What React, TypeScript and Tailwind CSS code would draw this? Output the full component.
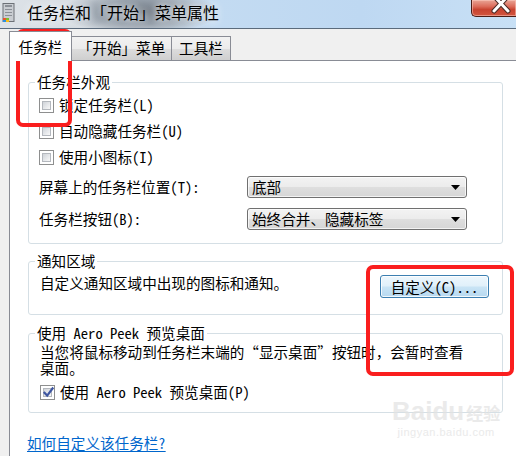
import React from "react";

const cjk = "font-['Noto_Sans_Mono_CJK_SC','Noto_Sans_CJK_SC',sans-serif]";

function CheckBox({ checked = false }: { checked?: boolean }) {
  return (
    <span className="relative flex h-[15px] w-[15px] shrink-0 border border-[#8e8f8f] bg-white p-[2px]">
      <span className="block h-full w-full border border-[#b4b8be] bg-[linear-gradient(135deg,#cfd3d8_0%,#e6e8eb_55%,#f8f8f8_100%)]" />
      {checked && (
        <svg
          className="absolute left-[1px] top-[0px]"
          width="13"
          height="13"
          viewBox="0 0 13 13"
        >
          <path
            d="M2.5 6.8 L5.2 9.6 L10.6 2.4"
            fill="none"
            stroke="#3e56a0"
            strokeWidth="2.2"
            strokeLinecap="square"
          />
        </svg>
      )}
    </span>
  );
}

function Select({ value }: { value: string }) {
  return (
    <div className="flex h-[22px] w-[220px] items-center justify-between rounded-[3px] border border-[#707070] bg-[linear-gradient(180deg,#f3f3f3_0%,#ececec_48%,#dedede_52%,#d6d6d6_100%)] pl-[4px] pr-[6px] shadow-[inset_0_0_0_1px_rgba(255,255,255,0.7)]">
      <span className="leading-[16px]">{value}</span>
      <svg width="9" height="5" viewBox="0 0 9 5">
        <path d="M0 0 H9 L4.5 5 Z" fill="#000" />
      </svg>
    </div>
  );
}

function Group({
  title,
  className = "",
  children,
}: {
  title: string;
  className?: string;
  children: React.ReactNode;
}) {
  return (
    <fieldset
      className={`ml-[18px] w-[475px] rounded-[3px] border border-[#d5dfe5] ${className}`}
    >
      <legend className="ml-[6px] px-[2px] leading-[16px]">{title}</legend>
      {children}
    </fieldset>
  );
}

function WindowIcon() {
  return (
    <svg width="15" height="21" viewBox="0 0 15 21">
      <rect x="1" y="0.5" width="11" height="18" fill="#c9cdd2" stroke="#6c7177" />
      <rect x="3" y="2" width="7" height="2" fill="#8b9097" />
      <rect x="3" y="6" width="7" height="1" fill="#8b9097" />
      <rect x="3" y="9" width="7" height="1" fill="#8b9097" />
      <rect x="3" y="12" width="7" height="1" fill="#8b9097" />
      <rect x="1" y="15" width="3" height="2" fill="#e8552d" />
      <rect x="4" y="15" width="3" height="2" fill="#7cbf2a" />
      <rect x="1" y="17" width="3" height="2" fill="#2d8fe0" />
      <rect x="4" y="17" width="3" height="2" fill="#f4bf1c" />
    </svg>
  );
}

function CloseButton() {
  return (
    <div className="h-[17px] w-[45px] shrink-0 overflow-hidden rounded-bl-[5px] border-b border-l border-[#4b1d16] bg-[linear-gradient(180deg,#e9a596_0%,#dc6c5b_40%,#c84330_60%,#d2563f_100%)] shadow-[inset_0_0_0_1px_rgba(255,210,200,0.5)]">
      <svg width="45" height="17" viewBox="0 0 45 17">
        <path
          d="M22 -4 L36 11 M36 -4 L22 11"
          stroke="#4a2a25"
          strokeWidth="5"
          strokeLinecap="round"
        />
        <path
          d="M22 -4 L36 11 M36 -4 L22 11"
          stroke="#ffffff"
          strokeWidth="3"
          strokeLinecap="round"
        />
      </svg>
    </div>
  );
}

export default function App() {
  return (
    <div
      className={`relative h-[456px] w-[516px] overflow-hidden bg-[#f0f0f0] text-[14.6px] text-black ${cjk}`}
    >
      {/* title bar */}
      <div className="flex h-[29px] items-start border-b border-[#5b6b7c] bg-[radial-gradient(ellipse_80px_22px_at_140px_12px,#6f7882_0%,#949ea9_55%,rgba(180,200,220,0)_100%),linear-gradient(90deg,#dde2e7_0%,#d2d9e0_28%,#c3dbf2_42%,#bed8f2_70%,#c8e0f5_100%)]">
        <div className="ml-[2px] mt-[3px]">
          <WindowIcon />
        </div>
        <div className="ml-[10px] mt-[2px] text-[16px] leading-[20px] [text-shadow:0_0_6px_#eef2f6,0_0_10px_#eef2f6]">
          任务栏和「开始」菜单属性
        </div>
        <div className="flex-1" />
        <CloseButton />
      </div>

      <div className="pl-[9px] pt-[2px]">
        {/* tabs */}
        <div className="flex items-end">
          <div className="relative z-10 mb-[-1px] h-[30px] w-[63px] border-l border-r border-t border-[#898c95] bg-white pt-[7px] text-center leading-[16px]">
            任务栏
          </div>
          <div className="h-[24px] w-[100px] border-r border-t border-[#898c95] bg-[linear-gradient(180deg,#f2f2f2_0%,#ebebeb_50%,#dddddd_51%,#cfcfcf_100%)] pt-[3px] text-center leading-[16px]">
            「开始」菜单
          </div>
          <div className="h-[24px] w-[59px] border-r border-t border-[#898c95] bg-[linear-gradient(180deg,#f2f2f2_0%,#ebebeb_50%,#dddddd_51%,#cfcfcf_100%)] pt-[3px] text-center leading-[16px]">
            工具栏
          </div>
        </div>

        {/* tab panel */}
        <div className="h-[420px] border-l border-t border-[#898c95] bg-white pt-[13px]">
          <Group title="任务栏外观">
            <div className="pb-[13px] pl-[10px] pt-[2px]">
              <div className="flex h-[26px] items-center gap-[5px]">
                <CheckBox />
                <span className="leading-[16px]">锁定任务栏(L)</span>
              </div>
              <div className="flex h-[26px] items-center gap-[5px]">
                <CheckBox />
                <span className="leading-[16px]">自动隐藏任务栏(U)</span>
              </div>
              <div className="flex h-[26px] items-center gap-[5px]">
                <CheckBox />
                <span className="leading-[16px]">使用小图标(I)</span>
              </div>
              <div className="mt-[6px] flex items-center">
                <span className="w-[208px] leading-[16px]">屏幕上的任务栏位置(T):</span>
                <Select value="底部" />
              </div>
              <div className="mt-[10px] flex items-center">
                <span className="w-[208px] leading-[16px]">任务栏按钮(B):</span>
                <Select value="始终合并、隐藏标签" />
              </div>
            </div>
          </Group>

          <Group title="通知区域" className="mt-[9px]">
            <div className="flex items-start justify-between pb-[16px] pl-[11px] pr-[13px] pt-[6px]">
              <span className="leading-[16px]">自定义通知区域中出现的图标和通知。</span>
              <button className="flex h-[23px] w-[109px] items-center justify-center rounded-[3px] border border-[#3c7fb1] bg-[linear-gradient(180deg,#eef7fd_0%,#e0f0fa_48%,#c9e4f5_52%,#b7d9f0_100%)] leading-[16px] shadow-[inset_0_0_0_1px_rgba(255,255,255,0.8)]">
                自定义(C)...
              </button>
            </div>
          </Group>

          <Group title="使用 Aero Peek 预览桌面" className="mt-[10px]">
            <div className="pb-[7px] pl-[11px] pt-[3px]">
              <div className="leading-[16px]">
                当您将鼠标移动到任务栏末端的“显示桌面”按钮时，会暂时查看
              </div>
              <div className="leading-[16px]">桌面。</div>
              <div className="mt-[3px] flex h-[26px] items-center gap-[5px]">
                <CheckBox checked />
                <span className="leading-[16px]">使用 Aero Peek 预览桌面(P)</span>
              </div>
            </div>
          </Group>

          <a
            href="#"
            className="ml-[17px] mt-[22px] block w-fit leading-[16px] text-[#0066cc] underline underline-offset-2"
          >
            如何自定义该任务栏?
          </a>
        </div>
      </div>

      {/* watermark */}
      <div className="pointer-events-none absolute left-[392px] top-[398px] flex flex-col items-center font-['Liberation_Sans',sans-serif] text-[#e2e2e2] opacity-70">
        <div className="flex items-baseline font-bold leading-[26px]">
          <span className="text-[26px]">Bai</span>
          <span className="text-[26px]">du</span>
          <span className={`ml-[2px] text-[17px] ${cjk}`}>经验</span>
        </div>
        <div className="text-[11px] leading-[12px] tracking-[0.5px]">jingyan.baidu.com</div>
      </div>

      {/* red annotation boxes */}
      <div className="pointer-events-none absolute left-[16px] top-[29px] h-[98px] w-[56px] rounded-[7px] border-[4px] border-[#fa1e1e]" />
      <div className="pointer-events-none absolute left-[366px] top-[265px] h-[111px] w-[148px] rounded-[7px] border-[4px] border-[#fa1e1e]" />
    </div>
  );
}
